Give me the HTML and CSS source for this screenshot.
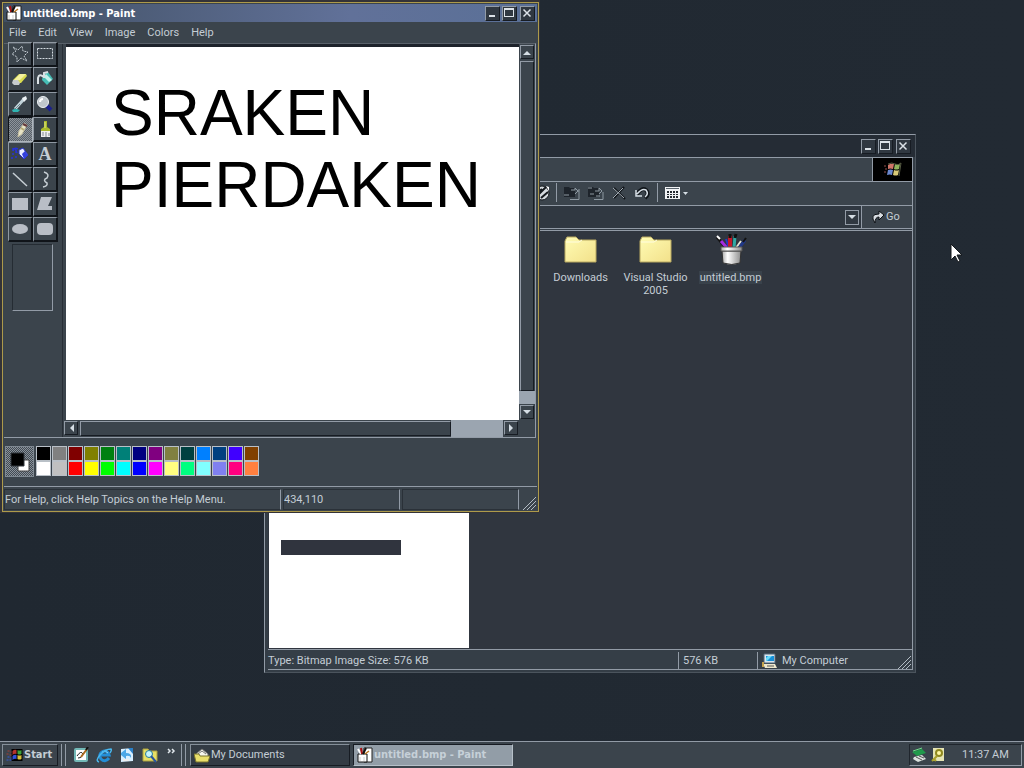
FILE: index.html
```html
<!DOCTYPE html>
<html lang="en">
<head>
<meta charset="utf-8">
<title>Desktop</title>
<link rel="stylesheet" href="styles.css">
</head>
<body>
<svg class="defs" aria-hidden="true">
  <defs>
    <linearGradient id="pot" x1="0" x2="1" y1="0" y2="0"><stop offset="0" stop-color="#aaa"/><stop offset=".3" stop-color="#fff"/><stop offset="1" stop-color="#8d8d8d"/></linearGradient>
    <linearGradient id="fold" x1="0" x2="1" y1="0" y2="1"><stop offset="0" stop-color="#fffcb4"/><stop offset="1" stop-color="#f2e08a"/></linearGradient>
    <symbol id="paint" viewBox="0 0 16 16"><path d="M7 1h8v14H7z" fill="#fff" stroke="#222"/><path d="M1 7h9v8H1z" fill="#fff" stroke="#111"/><path d="M4 7 1 2" stroke="#fff" stroke-width="2"/><path d="M5 7 4 1" stroke="#a11" stroke-width="2"/><path d="m6 7 3-6" stroke="#111" stroke-width="2"/><path d="m8 7 4-3" stroke="#b72" stroke-width="1.500"/><path d="M3 10v4m4-4v4" stroke="#ccc"/></symbol>
    <symbol id="winflag" viewBox="0 0 16 16"><path d="M5 2h11v12H5z" fill="#000"/><path d="M6 4q2-2 4-1v4Q8 6 6 8z" fill="#b5342d"/><path d="M11 3q2 1 4 0v4q-2 1-4 0z" fill="#3da33d"/><path d="M6 9q2-2 4-1v4q-2-1-4 1z" fill="#3050d8"/><path d="M11 8q2 1 4 0v4q-2 1-4 0z" fill="#d9c13a"/><path d="M1 4h2M4 5h1M0 7h2M3 8h2" stroke="#a63c34"/><path d="M1 10h2M4 11h1M0 13h2M3 13h2" stroke="#3558d8"/></symbol>
    <symbol id="brandflag" viewBox="0 0 20 18"><path d="M5 4q3-2 6-1l-1 5q-3-1-5 0z" fill="#cf7468"/><path d="M12 3q3 1 5 0l-1 5q-3 1-5 0z" fill="#8fb35c"/><path d="M5 9q3-1 5 0l-1 5q-2-1-5 0z" fill="#6a88cf"/><path d="M11 9q3 1 5 0l-1 5q-2 1-5 0z" fill="#d9ca78"/><path d="M1 5h2M2 8h2M1 11h2" stroke="#94504c"/><path d="M5 3q4-2 7 0t6-1l-2 13" fill="none" stroke="#555a42"/></symbol>
    <symbol id="folder" viewBox="0 0 34 30"><path d="M1 28V7l2-4h9l3 3h17v22z" fill="url(#fold)" stroke="#b8a860"/><path d="M2 8h13l3-2" fill="none" stroke="#fffde0"/></symbol>
    <symbol id="min" viewBox="0 0 12 12"><path d="M3 8h6v2H3z" fill="#dce2e8"/></symbol>
    <symbol id="max" viewBox="0 0 12 12"><path d="M1 1h10v9H1zM2 3h8v6H2z" fill="#dce2e8" fill-rule="evenodd"/></symbol>
    <symbol id="close" viewBox="0 0 12 12"><path d="m2.500 2.500 7 7m0-7-7 7" stroke="#dce2e8" stroke-width="1.500"/></symbol>
    <symbol id="grip" viewBox="0 0 13 13"><path d="M0 13 13 0M4 13l9-9M8 13l5-5" stroke="#b3bcc4"/></symbol>
  </defs>
</svg>

<div class="screen">
  <main class="desktop">
    <section class="window explorer" aria-label="My Documents">
      <header class="title-bar plain">
        <span class="grow"></span>
        <span class="window-buttons">
          <button aria-label="Minimize"><svg><use href="#min"/></svg></button><button aria-label="Maximize"><svg><use href="#max"/></svg></button><button class="close" aria-label="Close"><svg><use href="#close"/></svg></button>
        </span>
      </header>
      <div class="explorer-frame">
        <div class="brand-row"><span class="grow"></span><span class="brand"><svg width="20" height="18"><use href="#brandflag"/></svg></span></div>
        <div class="tool-row">
          <button aria-label="History"><svg width="16" height="16" viewBox="0 0 16 16"><circle cx="8" cy="8" r="7" fill="#d5dade" stroke="#15191d"/><path d="m5 9 7-7M7 13l7-6M3 8l5-4" stroke="#15191d" stroke-width="2"/><path d="m12 1 3 1v4" fill="#fff"/></svg></button>
          <i class="divider"></i>
          <button aria-label="Move to"><svg width="18" height="16" viewBox="0 0 18 16"><path d="M1 2h5l1 1h5v9H1z" fill="#1e242b"/><path d="M1 10h5M7 14.500h9V6h-2M16 6V4M8 5h4V3l3 3-3 3" fill="none" stroke="#8e99a2"/></svg></button>
          <button aria-label="Copy to"><svg width="18" height="16" viewBox="0 0 18 16"><path d="M1 2h5l1 1h5v9H1z" fill="#1e242b"/><path d="M1 3h4M3 9h4M7 14.500h9V7M9 11h4M8 6h4V3l3 3-3 3" fill="none" stroke="#8e99a2"/></svg></button>
          <button aria-label="Delete"><svg width="16" height="16" viewBox="0 0 16 16"><path d="m3 3 11 11M13 2 3 13" stroke="#11151a" stroke-width="2"/><path d="m2 3 11 10M12 3 2 13" stroke="#a6b0b8"/></svg></button>
          <button aria-label="Undo"><svg width="18" height="16" viewBox="0 0 18 16"><path d="M4 9q5-7 9-4 4 4-1 8" fill="none" stroke="#10151a" stroke-width="4"/><path d="M4 9q5-6 9-4 3 4-1 7M3 5v6h6" fill="none" stroke="#d5dde4" stroke-width="1.500"/></svg></button>
          <i class="divider"></i>
          <button class="views" aria-label="Views"><svg width="24" height="16" viewBox="0 0 24 16"><path d="M1 2h15v12H1z" fill="#f1f3f5"/><path d="M2 3.500h13" stroke="#59636c"/><path d="M3 6h2v2H3zm3 0h2v2H6zm3 0h2v2H9zm3 0h2v2h-2zM3 9h2v1H3zm3 0h2v1H6zm3 0h2v1H9zm3 0h2v1h-2zM3 11h2v2H3zm3 0h2v2H6zm3 0h2v2H9zm3 0h2v2h-2z" fill="#252b31"/><path d="M19 7h5l-2.500 3z" fill="#d5dde4"/></svg></button>
        </div>
        <div class="address-row">
          <input type="text" aria-label="Address">
          <button class="drop" aria-label="Show addresses"><svg width="10" height="6"><path d="M1 1h8L5 5z" fill="#d5dde4"/></svg></button>
          <button class="go"><svg width="14" height="14" viewBox="0 0 14 14"><path d="M4 13Q-2 4 8 4V1l5 4-5 5V7Q4 7 4 13z" fill="#d8dde2" stroke="#0d1115"/></svg>Go</button>
        </div>
        <div class="explorer-body">
          <aside class="details"><div class="preview-bar"></div></aside>
          <div class="files">
            <button class="file"><svg width="34" height="30"><use href="#folder"/></svg><span>Downloads</span></button>
            <button class="file"><svg width="34" height="30"><use href="#folder"/></svg><span>Visual Studio 2005</span></button>
            <button class="file selected"><svg width="32" height="32" viewBox="0 0 32 32"><path d="M11 15 2 4" stroke="#151515" stroke-width="3"/><path d="m2 3 3 3" stroke="#fff" stroke-width="2"/><path d="m12 15-6-7" stroke="#a32be0" stroke-width="3"/><path d="M14 15 11 6" stroke="#2438c8" stroke-width="2"/><path d="M15 15V3" stroke="#c3192c" stroke-width="4"/><path d="M15 5V1" stroke="#111" stroke-width="3"/><path d="m19 15 1-12" stroke="#30a9a5" stroke-width="3"/><path d="m20 5 1-4" stroke="#111" stroke-width="3"/><path d="m21 15 5-7" stroke="#e6e6d5" stroke-width="2"/><path d="m24 15 6-8" stroke="#203888" stroke-width="3"/><path d="m28 9 3-4" stroke="#111" stroke-width="2"/><path d="M7 18h19l-1 12q-8 3-17 0z" fill="url(#pot)" stroke="#333"/><path d="M6 14h21v4H6z" fill="url(#pot)" stroke="#555"/></svg><span>untitled.bmp</span></button>
          </div>
        </div>
        <footer class="explorer-status">
          <span class="type">Type: Bitmap Image Size: 576 KB</span><span class="size">576 KB</span>
          <span class="place"><svg width="16" height="16" viewBox="0 0 16 16"><path d="M2 1h11v9H2z" fill="#d8e5ef" stroke="#567"/><path d="M4 3h8v5H4z" fill="#168fd8"/><path d="M6 3h4L5 8H4V5z" fill="#69dbf8"/><path d="M1 11h12l2 4H3z" fill="#eee8cd"/><path d="M1 9v5" stroke="#c6a34b" stroke-width="2"/><path d="M5 13h7" stroke="#555"/></svg>My Computer</span>
          <svg class="grip" width="13" height="13"><use href="#grip"/></svg>
        </footer>
      </div>
    </section>

    <section class="window paint" aria-label="untitled.bmp - Paint">
      <div class="paint-inner">
        <header class="title-bar">
          <svg width="16" height="16"><use href="#paint"/></svg><h1>untitled.bmp - Paint</h1>
          <span class="window-buttons">
            <button aria-label="Minimize"><svg><use href="#min"/></svg></button><button aria-label="Maximize"><svg><use href="#max"/></svg></button><button class="close" aria-label="Close"><svg><use href="#close"/></svg></button>
          </span>
        </header>
        <nav class="menu"><button>File</button><button>Edit</button><button>View</button><button>Image</button><button>Colors</button><button>Help</button></nav>
        <div class="paint-body">
          <div class="tool-column">
            <div class="tools">
              <button aria-label="Free-form select"><svg viewBox="0 0 18 18"><path d="m2 2 5 3 4-4 1 5 5 1-4 4 3 5-6-3-4 4V12L1 9l4-3z" fill="none" stroke="#c4ccd3" stroke-dasharray="2 1"/></svg></button>
              <button aria-label="Select"><svg viewBox="0 0 18 18"><path d="M1.500 3.500h15v10h-15z" fill="none" stroke="#d5dce2" stroke-dasharray="2 1"/></svg></button>
              <button aria-label="Eraser"><svg viewBox="0 0 18 18"><path d="m2 10 6-6h7l1 2-6 7H3l-1-1z" fill="#d8db50"/><path d="m3 10 6-6h6l-6 6z" fill="#f4f1a0"/><path d="M2 10h5l2 3-1 2H3l-2-2z" fill="#c5cacd"/></svg></button>
              <button aria-label="Fill"><svg viewBox="0 0 18 18"><path d="m7 5 5-3 5 7-6 6-5-5z" fill="#45bdb5"/><path d="m10 4 6 6-3 2-5-5z" fill="#c1f1ea"/><path d="M8 7Q3 3 2 8v6M8 8V3l4-1" fill="none" stroke="#d9e0e4" stroke-width="2"/></svg></button>
              <button aria-label="Pick color"><svg viewBox="0 0 18 18"><path d="m4 14 9-10" stroke="#c2d3da" stroke-width="3"/><path d="m11 3 4-2 1 3-3 3z" fill="#edf2f5"/><path d="m4 14 5-5" stroke="#68858d" stroke-width="1"/><path d="M1 15q3-2 8 0l-2 2H2z" fill="#2fb4b2"/></svg></button>
              <button aria-label="Magnifier"><svg viewBox="0 0 18 18"><path d="m10 10 5 5" stroke="#1a208d" stroke-width="4"/><circle cx="7" cy="7" r="5.500" fill="#bfc6cc" stroke="#edf1f4"/><path d="M4 7q0-3 3-3" stroke="#fff" fill="none" stroke-width="2"/></svg></button>
              <button class="pressed" aria-label="Pencil"><svg viewBox="0 0 18 18"><path d="m6 16 1-6 5-8 3 2-5 9z" fill="#e8e4c7" stroke="#c9c3a3"/><path d="m11 3 4 2" stroke="#62373c" stroke-width="2"/><path d="m9 7 3 2" stroke="#b5aa76" stroke-width="2"/></svg></button>
              <button aria-label="Brush"><svg viewBox="0 0 18 18"><path d="M8 1h3v6l3 2v2H5V9l3-2z" fill="#a8b82b"/><path d="M9 2v6" stroke="#e4e886"/><path d="M5 11h9v6H5z" fill="#eee"/><path d="M7 12v4m3-4v5m3-4v3" stroke="#7e878e"/></svg></button>
              <button aria-label="Airbrush"><svg viewBox="0 0 18 18"><path d="m8 5 4-2 5 7-4 4-5-5z" fill="#e9edff" stroke="#2632cc"/><path d="m11 9 3-3 3 4-4 4z" fill="#3341dd"/><path d="M7 4q-4-2-5 2m0-3v3m3 0v2M2 8v2m3 1v2M1 12v2M4 3l2 5" stroke="#2632d8" stroke-width="1.500" fill="none"/></svg></button>
              <button class="letter" aria-label="Text">A</button>
              <button aria-label="Line"><svg viewBox="0 0 18 18"><path d="m2 3 14 13" stroke="#c7cfd5" stroke-width="1.500"/></svg></button>
              <button aria-label="Curve"><svg viewBox="0 0 18 18"><path d="M8 2q6 2 3 6-5 2 0 5 1 3-4 4" fill="none" stroke="#c7cfd5" stroke-width="1.500"/></svg></button>
              <button aria-label="Rectangle"><svg viewBox="0 0 18 18"><path d="M1 3h16v12H1z" fill="#b9bec6"/></svg></button>
              <button aria-label="Polygon"><svg viewBox="0 0 18 18"><path d="M5 2h11l-4 9h4v4H1z" fill="#b9bec6"/></svg></button>
              <button aria-label="Ellipse"><svg viewBox="0 0 18 18"><ellipse cx="9" cy="9" rx="8" ry="5" fill="#b9bec6"/></svg></button>
              <button aria-label="Rounded rectangle"><svg viewBox="0 0 18 18"><rect x="1" y="3" width="16" height="12" rx="4" fill="#b9bec6"/></svg></button>
            </div>
            <div class="tool-options"></div>
          </div>
          <div class="canvas-area">
            <div class="canvas">SRAKEN<br>PIERDAKEN</div>
            <div class="scroll vertical">
              <button aria-label="Scroll up"><svg width="8" height="5"><path d="M0 5 4 1l4 4z" fill="#d5dde4"/></svg></button><i class="thumb"></i><i class="track"></i><button aria-label="Scroll down"><svg width="8" height="5"><path d="M0 0h8L4 4z" fill="#d5dde4"/></svg></button>
            </div>
            <div class="scroll horizontal">
              <button aria-label="Scroll left"><svg width="5" height="8"><path d="M5 0v8L1 4z" fill="#d5dde4"/></svg></button><i class="thumb"></i><i class="track"></i><button aria-label="Scroll right"><svg width="5" height="8"><path d="M0 0v8l4-4z" fill="#d5dde4"/></svg></button>
            </div>
          </div>
        </div>
        <div class="palette-row">
          <div class="current"><svg width="20" height="20"><path d="M8 8h11v11H8z" fill="#fff" stroke="#444"/><path d="M1 1h13v13H1z" fill="#000" stroke="#30363c"/></svg></div>
          <div class="swatches">
            <button class="c-black" aria-label="Black"></button><button class="c-gray" aria-label="Gray"></button><button class="c-maroon" aria-label="Maroon"></button><button class="c-olive" aria-label="Olive"></button><button class="c-green" aria-label="Green"></button><button class="c-teal" aria-label="Teal"></button><button class="c-navy" aria-label="Navy"></button><button class="c-purple" aria-label="Purple"></button><button class="c-khaki" aria-label="Khaki"></button><button class="c-pine" aria-label="Pine"></button><button class="c-azure" aria-label="Azure"></button><button class="c-denim" aria-label="Denim"></button><button class="c-violet" aria-label="Violet"></button><button class="c-brown" aria-label="Brown"></button>
            <button class="c-white" aria-label="White"></button><button class="c-silver" aria-label="Silver"></button><button class="c-red" aria-label="Red"></button><button class="c-yellow" aria-label="Yellow"></button><button class="c-lime" aria-label="Lime"></button><button class="c-cyan" aria-label="Cyan"></button><button class="c-blue" aria-label="Blue"></button><button class="c-magenta" aria-label="Magenta"></button><button class="c-cream" aria-label="Cream"></button><button class="c-spring" aria-label="Spring green"></button><button class="c-sky" aria-label="Sky"></button><button class="c-lilac" aria-label="Lilac"></button><button class="c-rose" aria-label="Rose"></button><button class="c-orange" aria-label="Orange"></button>
          </div>
        </div>
        <footer class="paint-status"><span class="help">For Help, click Help Topics on the Help Menu.</span><span>434,110</span><span></span><svg class="grip" width="13" height="13"><use href="#grip"/></svg></footer>
      </div>
    </section>
    <svg class="cursor" width="13" height="20" viewBox="0 0 13 20"><path d="M1 1v16l4-4 3 6 2-1-3-6h5z" fill="#fff" stroke="#14181c"/></svg>
  </main>

  <footer class="taskbar">
    <button class="start"><svg width="17" height="16"><use href="#winflag"/></svg>Start</button>
    <i class="handle"></i>
    <div class="quick">
      <button aria-label="Show desktop"><svg width="16" height="16" viewBox="0 0 16 16"><rect x="1" y="1" width="14" height="14" rx="2" fill="#73b9b7"/><path d="M3 3h10v10H3z" fill="#fff"/><path d="M4 9q4-6 6-2-2 5-5 4" fill="none" stroke="#222"/><path d="m8 10 6-8" stroke="#a96a1d" stroke-width="2"/><path d="m13 3 2-3" stroke="#111" stroke-width="2"/></svg></button>
      <button aria-label="Internet Explorer"><svg width="16" height="16" viewBox="0 0 16 16"><path d="M13 11Q9 16 5 12 2 8 6 5q5-3 7 3H5" fill="none" stroke="#248ed6" stroke-width="3"/><path d="M6 5q4-2 6 1" fill="none" stroke="#8ad8f9"/><path d="M3 15Q-1 14 4 8t11-6q1 1-1 4" fill="none" stroke="#49b7ed" stroke-width="1.500"/></svg></button>
      <button aria-label="Mail"><svg width="16" height="16" viewBox="0 0 16 16"><path d="m2 2 12-1v13L2 15z" fill="#d9efff"/><path d="m9 1 5 6V1z" fill="#2b80c7"/><path d="m2 6 5-4v4q6 0 5 5-1-3-5-2v3L2 8z" fill="#4ba7e7"/><path d="M4 12h6v2H4z" fill="#eee"/></svg></button>
      <button aria-label="Search"><svg width="16" height="16" viewBox="0 0 16 16"><path d="M1 2h5l2 2h7v10H1z" fill="#e7df65" stroke="#aaa040"/><circle cx="7" cy="7" r="3.500" fill="#c6f4fa" stroke="#247a9a"/><path d="m9 9 5 6" stroke="#2855a0" stroke-width="2"/></svg></button>
      <button class="more" aria-label="More"><svg width="9" height="7"><path d="m1 1 2 2-2 2m4-4 2 2-2 2" fill="none" stroke="#e2e8ed" stroke-width="1.500"/></svg></button>
    </div>
    <i class="handle"></i>
    <button class="task"><svg width="16" height="16" viewBox="0 0 16 16"><path d="m2 7 6-5 6 5v6H2z" fill="#f7f7ed" stroke="#777"/><path d="m4 7 4-3 4 3" fill="none" stroke="#777"/><path d="M0 7h5l1 2h10l-2 6H2z" fill="#e9df6b" stroke="#7b752e"/></svg>My Documents</button>
    <button class="task active"><svg width="16" height="16"><use href="#paint"/></svg>untitled.bmp - Paint</button>
    <span class="grow"></span>
    <div class="tray"><svg width="16" height="16" viewBox="0 0 16 16"><path d="m1 5 10-3 4 4-9 3z" fill="#209a4b"/><path d="m2 4 9-3" stroke="#72dc8c"/><path d="m3 10 8-2 4 4-8 3-5-3z" fill="#dce2df"/><path d="m5 10 6 3m-3-4 5 2" stroke="#555"/></svg><svg width="16" height="16" viewBox="0 0 16 16"><path d="M3 1h11v13H3z" fill="#e5e4b4"/><circle cx="9" cy="6" r="3" fill="#fff7a3" stroke="#8f8920" stroke-width="2"/><path d="m7 9-5 5m2-2 2 2" stroke="#a9a02a" stroke-width="2"/></svg><time>11:37 AM</time></div>
  </footer>
</div>
</body>
</html>
```
FILE: styles.css
```css
* { box-sizing: border-box; }
:root { --face: #3b444c; --line: #929ba6; --dark: #171c23; --text: #c4cdd5; --bold: "DejaVu Sans Condensed", "Noto Sans", sans-serif; }
body { margin: 0; overflow: hidden; background: #212932; color: var(--text); font: 11px/14px Roboto, "Noto Sans", sans-serif; }
button, input { margin: 0; padding: 0; border: 0; background: none; color: inherit; font: inherit; }
svg { display: block; flex: none; }
.defs { position: absolute; width: 0; height: 0; }
.grow { flex: 1; }
.screen { min-height: 100vh; display: flex; flex-direction: column; }
.desktop { position: relative; flex: 1; background: linear-gradient(90deg, #202831, #222a33); }

.window { position: absolute; display: flex; flex-direction: column; }
.title-bar { display: flex; align-items: center; height: 18px; gap: 1px; padding-left: 2px; background: linear-gradient(90deg, #415063, #617199 65%, #5a7097); color: #fff; }
.title-bar h1 { flex: 1; margin: 0; padding-top: 1px; font: bold 11px/16px var(--bold); }
.window-buttons { display: flex; gap: 2px; padding-right: 2px; }
.window-buttons button { width: 15px; height: 15px; border: 1px solid var(--line); border-right-color: var(--dark); border-bottom-color: var(--dark); background: #303841; }
.window-buttons .close { margin-left: 1px; }
.window-buttons svg { width: 12px; height: 12px; }

.paint { left: 0; top: 0; width: 540px; height: 513px; padding: 2px 1px 1px 2px; background: #343337; }
.paint-inner { flex: 1; display: flex; flex-direction: column; min-height: 0; padding: 1px; border: 1px solid #ad9a4a; background: var(--face); }
.menu { display: flex; gap: 12px; height: 21px; padding: 0 5px; }
.paint-body { flex: 1; display: flex; min-height: 0; margin-right: 1px; border: 1px solid var(--line); border-left: 0; border-top-color: #59616a; }
.tool-column { width: 59px; padding-left: 4px; border-right: 1px solid #272e36; }
.tools { display: grid; grid-template-columns: 25px 25px; grid-auto-rows: 25px; margin-top: -2px; width: 50px; }
.tools button { display: flex; align-items: center; justify-content: center; border: 1px solid #8f98a2; border-right: 2px solid #101419; border-bottom: 2px solid #101419; }
.tools svg { width: 18px; height: 18px; }
.tools .pressed { border-color: #101419 #aeb6bd #aeb6bd #101419; border-width: 1px; background: repeating-conic-gradient(#8d949b 0 25%, #59616a 0 50%) 0 0 / 2px 2px; }
.tools .letter { font: bold 18px/20px "Liberation Serif", serif; }
.tool-options { width: 41px; height: 67px; margin: 2px 0 0 4px; border: 1px solid #252c33; border-right-color: var(--line); border-bottom-color: var(--line); }
.canvas-area { flex: 1; display: grid; grid-template: 1fr 17px / 1fr 17px; min-width: 0; padding-left: 1px; background: var(--face); }
.canvas { margin: 0 -1px 0 2px; padding: 30px 0 0 45px; border-top: 3px solid #1d222a; overflow: hidden; background: #fff; color: #000; font: 64px/72px "Liberation Sans", Arial, sans-serif; }
.scroll { display: flex; gap: 2px; }
.scroll button { flex: none; display: flex; align-items: center; justify-content: center; width: 14px; height: 14px; border: 1px solid var(--line); border-right-color: var(--dark); border-bottom-color: var(--dark); }
.scroll .thumb { flex: 1; border: 1px solid var(--line); border-right-color: var(--dark); border-bottom-color: var(--dark); }
.scroll .track { background: #9ba5b0; }
.vertical { flex-direction: column; padding: 1px 1px 1px 2px; }
.vertical .track { height: 13px; margin: -2px -1px -1px; }
.horizontal { padding: 1px 0; }
.horizontal .track { width: 52px; margin: -1px -1px -1px -2px; }

.palette-row { display: flex; align-items: flex-start; gap: 2px; height: 48px; padding: 8px 1px; }
.current { display: flex; align-items: center; justify-content: center; width: 29px; height: 31px; border: 1px solid #7f8992; background: repeating-conic-gradient(#89919a 0 25%, #424b53 0 50%) 0 0 / 2px 2px; }
.swatches { display: grid; grid-template-columns: repeat(14, 16px); grid-auto-rows: 15px; }
.swatches button { margin-right: 1px; border: 1px solid #b9c0c7; }
.c-black { background: #000; } .c-gray { background: #808080; } .c-maroon { background: #800000; } .c-olive { background: #808000; }
.c-green { background: #008010; } .c-teal { background: #008078; } .c-navy { background: #000080; } .c-purple { background: #800080; }
.c-khaki { background: #808040; } .c-pine { background: #004040; } .c-azure { background: #0080ff; } .c-denim { background: #004080; }
.c-violet { background: #4000ff; } .c-brown { background: #804000; } .c-white { background: #fff; } .c-silver { background: #c0c0c0; }
.c-red { background: #f00; } .c-yellow { background: #ff0; } .c-lime { background: #0f0; } .c-cyan { background: #0ff; }
.c-blue { background: #00f; } .c-magenta { background: #f0f; } .c-cream { background: #ffff80; } .c-spring { background: #00ff80; }
.c-sky { background: #80ffff; } .c-lilac { background: #8080f0; } .c-rose { background: #ff0080; } .c-orange { background: #ff8040; }
.paint-status { display: flex; gap: 2px; height: 24px; padding-top: 2px; border-top: 1px solid var(--line); }
.paint-status span { width: 117px; padding: 3px 0 0; border: 1px solid #2a3138; border-right-color: var(--line); }
.paint-status .help { flex: 1; white-space: nowrap; }
.grip { align-self: flex-end; margin-right: 1px; }
.paint-status .grip { margin-left: 2px; }

.explorer { left: 264px; top: 134px; width: 652px; height: 539px; border: 1px solid var(--line); border-right-color: #4b545d; border-bottom-color: #4b545d; background: #343d46; }
.plain { height: 22px; padding-right: 2px; background: #252c35; }
.explorer-frame { flex: 1; display: flex; flex-direction: column; min-height: 0; margin: 0 2px 2px 3px; border: 1px solid var(--line); border-left: 0; }
.brand-row { display: flex; height: 24px; background: var(--face); border-bottom: 1px solid var(--line); }
.brand { display: grid; place-items: center; width: 40px; border-left: 1px solid var(--line); background: #000; }
.tool-row { display: flex; align-items: center; gap: 6px; height: 24px; padding: 0 0 2px 266px; border-bottom: 1px solid var(--line); background: var(--face); }
.divider { width: 1px; height: 19px; background: var(--line); }
.address-row { display: flex; align-items: center; height: 23px; border-bottom: 1px solid var(--line); background: #303841; }
.address-row input { flex: 1; align-self: stretch; }
.drop { display: flex; align-items: center; justify-content: center; width: 14px; height: 15px; margin-right: 2px; border: 1px solid var(--line); }
.go { align-self: stretch; display: flex; align-items: center; gap: 1px; width: 51px; padding-left: 9px; border-left: 1px solid var(--line); background: var(--face); }
.explorer-body { flex: 1; display: flex; min-height: 0; margin-top: 1px; padding-left: 1px; border-top: 1px solid var(--line); background: #30363f; }
.details { width: 200px; margin-bottom: 1px; padding: 309px 12px 0; background: #fff; }
.preview-bar { width: 120px; height: 15px; background: #30343e; }
.files { flex: 1; display: flex; align-items: flex-start; padding: 1px 0 0 74px; }
.file { display: flex; flex-direction: column; align-items: center; width: 75px; line-height: 13px; }
.file svg { margin: 2px 0 7px; }
.file.selected svg { margin: 1px 0 6px; }
.file.selected span { padding: 0 1px; background: #39424b; }
.explorer-status { display: flex; gap: 2px; height: 20px; border-top: 1px solid var(--line); background: #353e47; }
.explorer-status span { margin-top: 2px; padding: 2px 2px 0; border-right: 1px solid var(--line); }
.explorer-status .type { flex: 1; padding-left: 0; }
.explorer-status .size { width: 77px; }
.explorer-status .place { display: flex; gap: 4px; width: 151px; padding-top: 1px; line-height: 16px; border: 0; }
.explorer-status .grip { margin-left: -15px; }
.cursor { position: absolute; left: 950px; top: 243px; }

.taskbar { flex: none; display: flex; align-items: stretch; height: 27px; padding: 2px; border-top: 1px solid var(--line); background: var(--face); }
.start, .task, .tray { display: flex; align-items: center; border: 1px solid #858f99; border-right-color: var(--dark); border-bottom-color: var(--dark); }
.start { width: 56px; padding-left: 3px; gap: 1px; font: bold 11px/14px var(--bold); }
.handle { width: 5px; margin-left: 3px; border: solid var(--line); border-width: 0 1px; }
.quick { display: flex; align-items: center; gap: 7px; width: 112px; padding-left: 7px; }
.quick .more { align-self: flex-start; margin: 4px 0 0 2px; }
.task { width: 160px; margin-left: 3px; padding-left: 3px; gap: 1px; background: #333b44; }
.handle + .task { margin-left: 4px; }
.task.active { border-color: var(--dark) #b6c0c8 #b6c0c8 var(--dark); background: #929da7; color: #c6d0d8; font: bold 11px/14px var(--bold); }
.tray { width: 113px; gap: 3px; padding-left: 1px; border-color: #20262d var(--line) var(--line) #20262d; }
.tray time { margin-left: 13px; }
```
